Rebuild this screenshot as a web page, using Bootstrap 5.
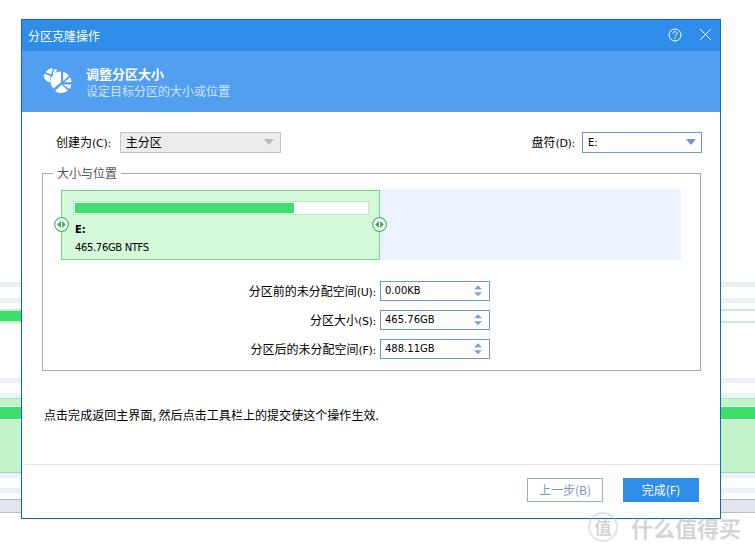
<!DOCTYPE html>
<html lang="zh-CN">
<head>
<meta charset="utf-8">
<title>分区克隆操作</title>
<link href="https://cdn.jsdelivr.net/npm/bootstrap@5.3.0/dist/css/bootstrap.min.css" rel="stylesheet">
<style>
html,body{margin:0;background:#fff;overflow:hidden}
body{font-family:"DejaVu Sans","Noto Sans CJK SC",sans-serif;font-size:12px;line-height:1.2;color:#000}
.cjk{font-family:"Noto Sans CJK SC",sans-serif}
.stage{position:relative;width:755px;height:552px;overflow:hidden}
.backdrop{padding-top:282px}
.st{height:5px}
.st-grey{background:#eceef5}
.st-blue{background:#e9f1fc}
.mt-11{margin-top:11px}.mt-6{margin-top:6px}.mt-55{margin-top:55px}.mt-10{margin-top:10px}
.st-part{height:14px;border-top:2px solid #c5eccf;border-bottom:2px solid #c5eccf}
.st-part i{display:block;width:60px;height:10px;background:#3be06a}
.st-block{height:75px;background:#c3f3c8;border-bottom:1px solid #97dca6;border-top:1px solid #a8e6b4;padding-top:7px;margin-top:0}
.st-block i{display:block;height:12px;background:#3be06a;border-top:1px solid #fff;border-bottom:1px solid #fff;box-sizing:content-box}
.st-foot{height:14px;background:#e3e5ee;border-top:1px solid #b5b5b8;border-bottom:1px solid #bdbdc0}
.win{position:absolute;left:21px;top:19px;width:700px;height:500px;border:1px solid #0b6cba;background:#fff;display:flex;flex-direction:column}
.win-title{height:31px;background:#2e8de8;color:#fff;padding:0 8px 0 6px;flex:none}
.win-title span{font-size:12px;margin-top:2px}
.win-btns{gap:17px;margin-top:-2px}
.win-head{height:61px;background:#529ff2;flex:none;padding:14px 0 0 21px;gap:13px}
.win-head .h1t{font-size:13px;font-weight:700;color:#fff;line-height:17px}
.win-head .h2t{font-size:12px;color:#cfe4fb;line-height:17px}
.head-ico{margin-top:2px;flex:none}
.win-body{flex:1 1 auto;padding:20px 18px 0 20px}
.pick{height:21px;border:1px solid #c4c4c4;background:#ececec;padding:0 5px;justify-content:space-between;font-size:12px}
.pick-a{width:161px;margin-left:9px}
.pick-b{width:120px;margin-left:7px;border-color:#6a96da;background:#fff;font-size:10px;padding-right:4px}
.lab{font-size:12px;padding-top:1px}
.lab b{font-weight:400;font-family:"DejaVu Sans",sans-serif;font-size:11px;letter-spacing:-.3px}
.lab-a{margin-left:14px}
.zone{border:1px solid #aaa;margin:13px 1px 0 0;padding:0 19px 0 18px;height:205px;min-width:0}
.zone legend{float:none;width:auto;font-size:12px;line-height:14px;color:#555;margin:0 0 0 -8px;padding:0 4px;height:14px}
.track{height:71px;background:#ebf3fe;margin-top:9px;display:flex;align-items:flex-end}
.part{position:relative;width:319px;height:70px;background:#d5fad9;border:1px solid #79cf8c;padding:10px 10px 0 11px}
.gauge{height:14px;border:1px solid #b9edc9;background:#fff;padding:1px}
.gauge i{display:block;height:10px;width:75%;background:#3be06a}
.p-name{font-size:10px;font-weight:700;margin:9px 0 0 2px;line-height:12px}
.p-size{font-size:10px;margin:6px 0 0 2px;line-height:12px;letter-spacing:-.35px}
.grip{position:absolute;top:26px;width:15px;height:15px}
.grip-l{left:-8px}
.grip-r{right:-8px}
.fields{margin-top:21px;gap:9px;padding-right:191px}
.fld{width:110px;height:20px;border:1px solid #6a96da;background:#fff;margin-left:4px;padding:0 7px 0 4px;font-size:10px;justify-content:space-between}
.note{font-size:12px;margin:37px 0 0 2px;letter-spacing:.05px}
.win-foot{height:54px;flex:none;border-top:1px solid #e4e8ee;padding:13px 21px 0 0;justify-content:flex-end;gap:20px}
.btn.act{width:76px;height:24px;padding:0;font-size:12px;border-radius:0;line-height:22px}
.act-off{border:1px solid #92abd4;color:#7e97ba;background:#fff}
.act-on{border:1px solid #2e8de8;color:#fff;background:#2e8de8}
.mark-w{position:absolute;left:588px;top:512px;display:flex;align-items:center;gap:13px;color:rgba(170,170,170,.5)}
.mark-w .ring{width:30px;height:30px;border:2px solid rgba(190,190,190,.45);border-radius:50%;font-size:17px;line-height:26px;text-align:center;font-family:"Noto Sans CJK SC",sans-serif;font-weight:700}
.mark-w .wm{font-size:22px;line-height:28px;font-family:"Noto Sans CJK SC",sans-serif;font-weight:700}
</style>
</head>
<body>
<div class="stage">
  <div class="backdrop">
    <div class="st st-grey"></div>
    <div class="st st-blue mt-11"></div>
    <div class="st-part mt-6"><i></i></div>
    <div class="st st-blue mt-55"></div>
    <div class="st st-blue mt-10"></div>
    <div class="st-block"><i></i></div>
    <div class="st st-blue"></div>
    <div class="st st-blue mt-10"></div>
    <div class="st-foot mt-6"></div>
  </div>

  <div class="win">
    <div class="win-title d-flex align-items-center justify-content-between">
      <span class="cjk">分区克隆操作</span>
      <div class="win-btns d-flex align-items-center">
        <svg width="14" height="14" viewBox="0 0 14 14" fill="none" stroke="#fff" stroke-width="1"><circle cx="7" cy="7" r="6"/><path d="M5 5.600c0-2.600 4-2.600 4 0 0 1.500-2 1.600-2 3.100"/><path d="M7 9.800v1.200"/></svg>
        <svg width="13" height="13" viewBox="0 0 13 13" fill="none" stroke="#fff" stroke-width="1"><path d="M1 1l11 11M12 1L1 12"/></svg>
      </div>
    </div>
    <div class="win-head d-flex cjk">
      <svg width="30" height="27" viewBox="0 0 30 27" fill="#fff" class="head-ico">
        <path d="M10 1.200 8.200 7.200 2.600 5.300C4.300 2.800 7 1.200 10 1.200Z"/>
        <path d="M11.600 2c1 .2 2 .6 2.800 1.200l-3.600 4.200-1.200-.4Z"/>
        <path d="M1.600 6.800 7.600 8.900 7.200 15.600c-3.600-.8-6.400-3.700-6.400-7 0-.7.300-1.300.8-1.800Z"/>
        <path d="M18 4.600v10.600l-7.600 6.400C8.600 19.600 7.600 17.200 7.600 14.800 7.600 9.200 12.200 4.600 18 4.600Z"/>
        <path d="M20.200 5c2.200.5 4.200 1.800 5.600 3.600l-5.600 5.600Z"/>
        <path d="M27 10.200c1 1.500 1.500 3.200 1.500 5h-7.300Z"/>
        <path d="M20.200 17.400h8.200c-.3 1.700-1 3.200-2 4.500Z"/>
        <path d="M18.600 17.600l6.200 6c-1.800 1.500-4.100 2.400-6.600 2.400-2.300 0-4.400-.8-6.100-2.100Z"/>
      </svg>
      <div>
        <div class="h1t">调整分区大小</div>
        <div class="h2t">设定目标分区的大小或位置</div>
      </div>
    </div>
    <div class="win-body">
      <div class="d-flex align-items-center justify-content-between">
        <div class="d-flex align-items-center">
          <span class="lab lab-a cjk">创建为<b>(C):</b></span>
          <div class="pick pick-a d-flex align-items-center cjk"><span>主分区</span>
            <svg width="12" height="7" viewBox="0 0 12 7"><path d="M1 0h10L6 6Z" fill="#bdbdbd"/></svg></div>
        </div>
        <div class="d-flex align-items-center">
          <span class="lab cjk">盘符<b>(D):</b></span>
          <div class="pick pick-b d-flex align-items-center"><span>E:</span>
            <svg width="12" height="7" viewBox="0 0 12 7"><path d="M1 0h10L6 6Z" fill="#6a96da"/></svg></div>
        </div>
      </div>

      <fieldset class="zone">
        <legend class="cjk">大小与位置</legend>
        <div class="track">
          <div class="part">
            <div class="gauge"><i></i></div>
            <div class="p-name">E:</div>
            <div class="p-size">465.76GB NTFS</div>
            <svg class="grip grip-l" viewBox="0 0 15 15"><circle cx="7.500" cy="7.500" r="6.800" fill="#fff" stroke="#4cb962" stroke-width="1.200"/><path d="M6.800 4 3.300 7.500 6.800 11ZM8.200 4l3.500 3.500L8.200 11Z" fill="#2fa94c"/></svg>
            <svg class="grip grip-r" viewBox="0 0 15 15"><circle cx="7.500" cy="7.500" r="6.800" fill="#fff" stroke="#4cb962" stroke-width="1.200"/><path d="M6.800 4 3.300 7.500 6.800 11ZM8.200 4l3.500 3.500L8.200 11Z" fill="#2fa94c"/></svg>
          </div>
        </div>
        <div class="fields d-flex flex-column align-items-end">
          <div class="d-flex align-items-center">
            <span class="lab cjk">分区前的未分配空间<b>(U):</b></span>
            <div class="fld d-flex align-items-center"><span>0.00KB</span>
              <svg width="8" height="12" viewBox="0 0 9 13" fill="#7f9fcf"><path d="M4.500 0 9 4.500H0ZM0 8h9L4.500 12.500Z"/></svg></div>
          </div>
          <div class="d-flex align-items-center">
            <span class="lab cjk">分区大小<b>(S):</b></span>
            <div class="fld d-flex align-items-center"><span>465.76GB</span>
              <svg width="8" height="12" viewBox="0 0 9 13" fill="#7f9fcf"><path d="M4.500 0 9 4.500H0ZM0 8h9L4.500 12.500Z"/></svg></div>
          </div>
          <div class="d-flex align-items-center">
            <span class="lab cjk">分区后的未分配空间<b>(F):</b></span>
            <div class="fld d-flex align-items-center"><span>488.11GB</span>
              <svg width="8" height="12" viewBox="0 0 9 13" fill="#7f9fcf"><path d="M4.500 0 9 4.500H0ZM0 8h9L4.500 12.500Z"/></svg></div>
          </div>
        </div>
      </fieldset>

      <div class="note cjk">点击完成返回主界面, 然后点击工具栏上的提交使这个操作生效.</div>
    </div>
    <div class="win-foot d-flex cjk">
      <button type="button" class="btn act act-off">上一步(B)</button>
      <button type="button" class="btn act act-on">完成(F)</button>
    </div>
  </div>

  <div class="mark-w">
    <div class="ring">值</div>
    <div class="wm">什么值得买</div>
  </div>
</div>
</body>
</html>
